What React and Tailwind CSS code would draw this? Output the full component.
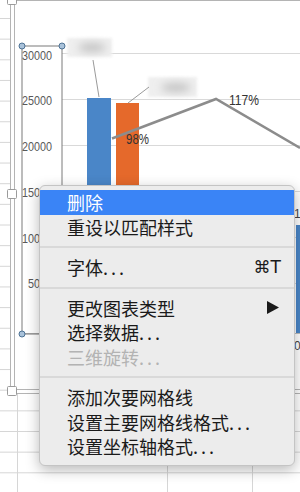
import { Fragment } from 'react';

const rowLines = Array.from({ length: 24 }, (_, i) => 18.5 + i * 20.65);
const gridLines = [53, 99, 145, 191, 237, 283];
const axisLabels = [
    { t: '30000', y: 55, w: 30 },
    { t: '25000', y: 100, w: 30 },
    { t: '20000', y: 146, w: 30 },
    { t: '15000', y: 192, w: 30 },
    { t: '10000', y: 238, w: 30 },
    { t: '5000', y: 283, w: 24 },
];

function ChartCanvas() {
    return (
        <svg width="300" height="492" viewBox="0 0 300 492" className="block">
            <defs>
                <filter id="soft" x="-50%" y="-50%" width="200%" height="200%">
                    <feGaussianBlur stdDeviation="1.5" />
                </filter>
                <filter id="blob" x="-50%" y="-100%" width="200%" height="300%">
                    <feGaussianBlur stdDeviation="4" />
                </filter>
            </defs>

            <rect width="300" height="492" fill="#ffffff" />

            {/* sheet rows + columns */}
            {rowLines.map((y) => (
                <line key={y} x1="0" x2={y < 392 ? 10 : 300} y1={y} y2={y} stroke="#d6d6d6" />
            ))}
            {[17.5, 167.5, 252.5].map((x) => (
                <line key={x} x1={x} x2={x} y1="393" y2="492" stroke="#d6d6d6" />
            ))}

            {/* chart frame (selected) */}
            <rect x="10.5" y="-3.5" width="400" height="397" fill="#ffffff" stroke="#b4b4b4" />
            <rect x="14.5" y="0.5" width="400" height="389" fill="#ffffff" stroke="#b4b4b4" />

            {/* gridlines */}
            {gridLines.map((y) => (
                <line key={y} x1="62" x2="300" y1={y + 0.5} y2={y + 0.5} stroke="#d9d9d9" />
            ))}
            <line x1="22" x2="300" y1="333.5" y2="333.5" stroke="#bdbdbd" />

            {/* bars */}
            <rect x="87" y="98" width="24" height="235" fill="#4a86c8" />
            <rect x="116" y="103" width="23" height="230" fill="#e5692b" />
            <rect x="296" y="225" width="10" height="108" fill="#4a86c8" />

            {/* blurred data labels */}
            <rect x="67" y="38" width="45" height="19" fill="#efefef" filter="url(#soft)" />
            <ellipse cx="92" cy="47.5" rx="14" ry="4" fill="#bdbdbd" filter="url(#blob)" />
            <rect x="148" y="77" width="49" height="20" fill="#efefef" filter="url(#soft)" />
            <ellipse cx="176" cy="87.5" rx="15" ry="4" fill="#bdbdbd" filter="url(#blob)" />

            {/* leader lines */}
            <line x1="93" y1="60" x2="99" y2="97" stroke="#9a9a9a" />
            <line x1="149" y1="87" x2="128" y2="103" stroke="#9a9a9a" />

            {/* line series */}
            <polyline points="112,138.5 216,99 300,148" fill="none" stroke="#8c8c8c" strokeWidth="2.5" />
            <text x="126" y="144" fontSize="14" textLength="23" lengthAdjust="spacingAndGlyphs" fill="#333" fontFamily="Liberation Sans, sans-serif">98%</text>
            <text x="229" y="105" fontSize="14" textLength="30" lengthAdjust="spacingAndGlyphs" fill="#333" fontFamily="Liberation Sans, sans-serif">117%</text>
            <text x="294" y="218" fontSize="12" fill="#444" fontFamily="Liberation Sans, sans-serif">1</text>
            <text x="294" y="350" fontSize="12" fill="#444" fontFamily="Liberation Sans, sans-serif">0</text>

            {/* vertical axis (selected) */}
            <rect x="22" y="46" width="40" height="288" fill="none" stroke="#7a7a7a" />
            {axisLabels.map((a) => (
                <text key={a.t} x={52 - a.w} y={a.y + 5} fontSize="13.5" textLength={a.w} lengthAdjust="spacingAndGlyphs" fill="#595959" fontFamily="Liberation Sans, sans-serif">
                    {a.t}
                </text>
            ))}
            {[[22, 46], [62, 46], [22, 334]].map(([cx, cy]) => (
                <circle key={`${cx}-${cy}`} cx={cx} cy={cy} r="3" fill="#a9c2da" stroke="#4e7395" />
            ))}

            {/* frame handles */}
            {[-5, 189, 386].map((y) => (
                <rect key={y} x="7.5" y={y + 0.5} width="9" height="9" rx="1" fill="#ffffff" stroke="#9b9b9b" />
            ))}
        </svg>
    );
}

function Dots() {
    return <span className="tracking-[3px]">...</span>;
}

function Item({ children, active, disabled, right }) {
    return (
        <div
            className={`h-[24.5px] flex items-center justify-between pl-[27px] pr-[13px] text-[18px] leading-none ${
                active ? 'bg-[#3a84f6] text-white' : disabled ? 'text-[#b3b3b3]' : 'text-[#1a1a1a]'
            }`}
        >
            <span className="whitespace-nowrap">{children}</span>
            {right}
        </div>
    );
}

function Separator() {
    return <div className="h-[2px] my-[7px] bg-[#d9d9d9]" />;
}

const menu = [
    { label: '删除', active: true },
    { label: '重设以匹配样式' },
    'sep',
    { label: '字体', dots: true, right: <span className="font-['DejaVu_Sans',sans-serif] text-[17px] text-[#1a1a1a]">⌘T</span> },
    'sep',
    {
        label: '更改图表类型',
        right: (
            <svg width="12" height="13" viewBox="0 0 12 13" className="mr-[2px]">
                <polygon points="0,0 12,6.5 0,13" fill="#1a1a1a" />
            </svg>
        ),
    },
    { label: '选择数据', dots: true },
    { label: '三维旋转', dots: true, disabled: true },
    'sep',
    { label: '添加次要网格线' },
    { label: '设置主要网格线格式', dots: true },
    { label: '设置坐标轴格式', dots: true },
];

export default function App() {
    return (
        <div className="relative w-[300px] h-[492px] overflow-hidden bg-white">
            <ChartCanvas />

            <div className="absolute left-[39px] top-[185px] w-[256px] rounded-[6px] border border-[#c4c4c4] bg-[#ececec] pt-[4px] pb-[6px] overflow-hidden shadow-[0_4px_14px_rgba(0,0,0,0.28)] font-['Noto_Sans_CJK_SC',sans-serif]">
                {menu.map((m, i) =>
                    m === 'sep' ? (
                        <Separator key={i} />
                    ) : (
                        <Fragment key={i}>
                            <Item active={m.active} disabled={m.disabled} right={m.right}>
                                {m.label}
                                {m.dots && <Dots />}
                            </Item>
                        </Fragment>
                    )
                )}
            </div>
        </div>
    );
}
